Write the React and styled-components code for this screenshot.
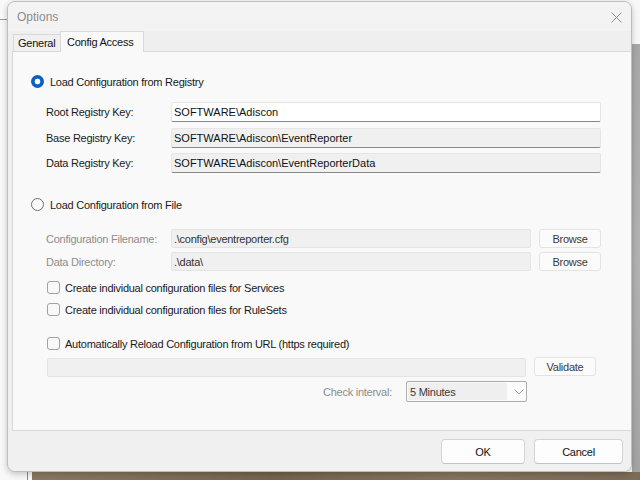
import React from 'react';
import styled, { createGlobalStyle } from 'styled-components';

const Global = createGlobalStyle`
  html, body { margin: 0; padding: 0; }
  body {
    width: 640px; height: 480px; overflow: hidden;
    font-family: "Liberation Sans", Arial, sans-serif;
  }
`;

const Desktop = styled.div`
  width: 640px;
  height: 480px;
  box-sizing: border-box;
  padding: 1px 8px 8px 7px;
  display: flex;
  background:
    linear-gradient(#9a9a9a, #9a9a9a) 0 19px / 7px 1px no-repeat,
    linear-gradient(#8a8a8a, #8a8a8a) 27px 472px / 1px 8px no-repeat,
    linear-gradient(90deg, #8a7a63, #74644f 40%, #857560 70%, #7b6b57) 32px 472px / 608px 8px no-repeat,
    linear-gradient(#a9a8a8, #b3b2b2 50%, #a5a4a4) 632px 44px / 8px 436px no-repeat,
    #f8f8f8;
`;

const Window = styled.div`
  flex: 1;
  display: flex;
  flex-direction: column;
  border: 1px solid #bdbdbd;
  border-radius: 8px;
  overflow: hidden;
  background: #efefef;
  box-shadow: 0 2px 6px rgba(0, 0, 0, 0.22);
  font-size: 11px;
  letter-spacing: -0.25px;
  color: #1a1a1a;
`;

const TitleBar = styled.div`
  height: 29px;
  flex: none;
  display: flex;
  align-items: center;
  justify-content: space-between;
  padding: 0 9px 0 9px;
  background: #f3f3f3;
`;

const Title = styled.span`
  font-size: 12px;
  letter-spacing: 0;
  color: #8c8c8c;
  margin-top: 1px;
`;

const CloseBtn = styled.svg`
  width: 11px;
  height: 11px;
  margin-top: 1px;
`;

const Client = styled.div`
  flex: 1;
  display: flex;
  flex-direction: column;
  padding-left: 4px;
`;

const TabStrip = styled.div`
  height: 20px;
  flex: none;
  display: flex;
  align-items: flex-end;
  padding-left: 1px;
  position: relative;
  z-index: 1;
`;

const Tab = styled.div`
  box-sizing: border-box;
  width: ${p => p.$w}px;
  height: ${p => (p.$active ? 21 : 17)}px;
  margin-bottom: ${p => (p.$active ? -1 : 0)}px;
  margin-left: ${p => (p.$active ? -1 : 0)}px;
  border: 1px solid #d9d9d9;
  border-bottom: none;
  background: ${p => (p.$active ? '#f9f9f9' : '#f0f0f0')};
  display: flex;
  align-items: ${p => (p.$active ? 'flex-start' : 'center')};
  padding: ${p => (p.$active ? '4px 0 0 6px' : '0 0 0 4px')};
  color: #111;
`;

const Panel = styled.div`
  flex: 1;
  display: flex;
  flex-direction: column;
  background: #f9f9f9;
  border: 1px solid #d9d9d9;
  border-right: none;
  padding-left: 18px;
`;

const RadioRow = styled.label`
  display: flex;
  align-items: center;
  gap: 6px;
  height: 13px;
  margin-top: ${p => p.$mt}px;
`;

const Radio = styled.span`
  box-sizing: border-box;
  width: 13px;
  height: 13px;
  border-radius: 50%;
  flex: none;
  ${p =>
    p.$checked
      ? `background: radial-gradient(circle, #ffffff 0 2.6px, #0a63b8 3.2px);`
      : `background: #fbfbfb; border: 1px solid #6e6e6e;`}
`;

const FieldGrid = styled.div`
  display: grid;
  grid-template-columns: 117px ${p => p.$cols};
  grid-auto-rows: ${p => p.$rowH}px;
  column-gap: 8px;
  row-gap: ${p => p.$gap}px;
  margin-top: ${p => p.$mt}px;
  margin-left: 15px;
  align-items: center;
`;

const FieldLabel = styled.span`
  color: ${p => (p.$disabled ? '#8d8d8d' : '#1a1a1a')};
`;

const TextBox = styled.div`
  box-sizing: border-box;
  height: 100%;
  display: flex;
  align-items: center;
  padding-left: 2px;
  border-radius: 2px;
  border: 1px solid ${p => (p.$variant === 'disabled' ? '#e4e4e4' : '#e6e6e6')};
  border-bottom-color: ${p => (p.$variant === 'disabled' ? '#e4e4e4' : '#888888')};
  background: ${p => (p.$variant === 'edit' ? '#ffffff' : '#f0f0f0')};
  color: ${p => (p.$variant === 'disabled' ? '#333' : '#111')};
  letter-spacing: ${p => (p.$variant === 'disabled' ? '-0.25px' : '0')};
  white-space: nowrap;
  overflow: hidden;
`;

const SmallButton = styled.div`
  box-sizing: border-box;
  height: ${p => p.$h || 19}px;
  width: 62px;
  display: flex;
  align-items: center;
  justify-content: center;
  background: #fbfbfb;
  border: 1px solid #e3e3e3;
  border-radius: 3px;
  color: #3a3a3a;
  align-self: ${p => p.$align || 'center'};
`;

const CheckRow = styled.label`
  display: flex;
  align-items: center;
  gap: 5px;
  height: 13px;
  margin-top: ${p => p.$mt}px;
  margin-left: 16px;
`;

const CheckBox = styled.span`
  box-sizing: border-box;
  width: 13px;
  height: 13px;
  flex: none;
  border: 1px solid #a2a2a2;
  border-radius: 3px;
  background: #f8f8f8;
`;

const UrlGrid = styled.div`
  display: grid;
  grid-template-columns: 479px 62px;
  grid-template-rows: 20px 21px;
  column-gap: 8px;
  row-gap: 4px;
  margin-top: 7px;
  margin-left: 16px;
`;

const UrlBox = styled(TextBox)`
  height: 19px;
  align-self: end;
`;

const IntervalRow = styled.div`
  display: flex;
  align-items: center;
  justify-content: flex-end;
  gap: 14px;
  margin-right: -1px;
`;

const Combo = styled.div`
  box-sizing: border-box;
  width: 121px;
  height: 21px;
  border: 1px solid #acacac;
  border-radius: 2px;
  background: #fbfbfb;
  display: flex;
  align-items: center;
  padding: 1px;
`;

const ComboText = styled.div`
  width: 99px;
  height: 100%;
  background: #efefef;
  display: flex;
  align-items: center;
  padding-left: 2px;
  color: #3a3a3a;
  box-sizing: border-box;
`;

const Chevron = styled.svg`
  width: 10px;
  height: 6px;
  margin-left: 7px;
`;

const Footer = styled.div`
  height: 40px;
  flex: none;
  display: flex;
  justify-content: flex-end;
  align-items: flex-start;
  gap: 9px;
  padding: 8px 8px 0 0;
  box-sizing: border-box;
  background: #f0f0f0;
`;

const DialogButton = styled.div`
  box-sizing: border-box;
  width: ${p => p.$w}px;
  height: 25px;
  display: flex;
  align-items: center;
  justify-content: center;
  background: #fdfdfd;
  border: 1px solid #d4d4d4;
  border-bottom-color: #c4c4c4;
  border-radius: 4px;
  color: #111;
`;

export default function App() {
  return (
    <>
      <Global />
      <Desktop>
        <Window>
          <TitleBar>
            <Title>Options</Title>
            <CloseBtn viewBox="0 0 11 11">
              <path d="M0.5 0.5 L10.5 10.5 M10.5 0.5 L0.5 10.5" stroke="#8a8a8a" strokeWidth="1" fill="none" />
            </CloseBtn>
          </TitleBar>
          <Client>
            <TabStrip>
              <Tab $w={48}>General</Tab>
              <Tab $w={84} $active>Config Access</Tab>
            </TabStrip>
            <Panel>
              <RadioRow $mt={23}>
                <Radio $checked />
                <span>Load Configuration from Registry</span>
              </RadioRow>
              <FieldGrid $mt={14} $cols="430px" $rowH={20} $gap={5.5}>
                <FieldLabel>Root Registry Key:</FieldLabel>
                <TextBox $variant="edit">SOFTWARE\Adiscon</TextBox>
                <FieldLabel>Base Registry Key:</FieldLabel>
                <TextBox $variant="readonly">SOFTWARE\Adiscon\EventReporter</TextBox>
                <FieldLabel>Data Registry Key:</FieldLabel>
                <TextBox $variant="readonly">SOFTWARE\Adiscon\EventReporterData</TextBox>
              </FieldGrid>
              <RadioRow $mt={25}>
                <Radio />
                <span>Load Configuration from File</span>
              </RadioRow>
              <FieldGrid $mt={18} $cols="360px 62px" $rowH={19} $gap={4}>
                <FieldLabel $disabled>Configuration Filename:</FieldLabel>
                <TextBox $variant="disabled">.\config\eventreporter.cfg</TextBox>
                <SmallButton>Browse</SmallButton>
                <FieldLabel $disabled>Data Directory:</FieldLabel>
                <TextBox $variant="disabled">.\data\</TextBox>
                <SmallButton>Browse</SmallButton>
              </FieldGrid>
              <CheckRow $mt={10}>
                <CheckBox />
                <span>Create individual configuration files for Services</span>
              </CheckRow>
              <CheckRow $mt={9}>
                <CheckBox />
                <span>Create individual configuration files for RuleSets</span>
              </CheckRow>
              <CheckRow $mt={21}>
                <CheckBox />
                <span>Automatically Reload Configuration from URL (https required)</span>
              </CheckRow>
              <UrlGrid>
                <UrlBox $variant="disabled" />
                <SmallButton $align="start">Validate</SmallButton>
                <IntervalRow>
                  <FieldLabel $disabled>Check interval:</FieldLabel>
                  <Combo>
                    <ComboText>5 Minutes</ComboText>
                    <Chevron viewBox="0 0 10 6">
                      <path d="M0.5 0.5 L5 5 L9.5 0.5" stroke="#a0a0a0" strokeWidth="1" fill="none" />
                    </Chevron>
                  </Combo>
                </IntervalRow>
              </UrlGrid>
            </Panel>
          </Client>
          <Footer>
            <DialogButton $w={84}>OK</DialogButton>
            <DialogButton $w={89}>Cancel</DialogButton>
          </Footer>
        </Window>
      </Desktop>
    </>
  );
}
